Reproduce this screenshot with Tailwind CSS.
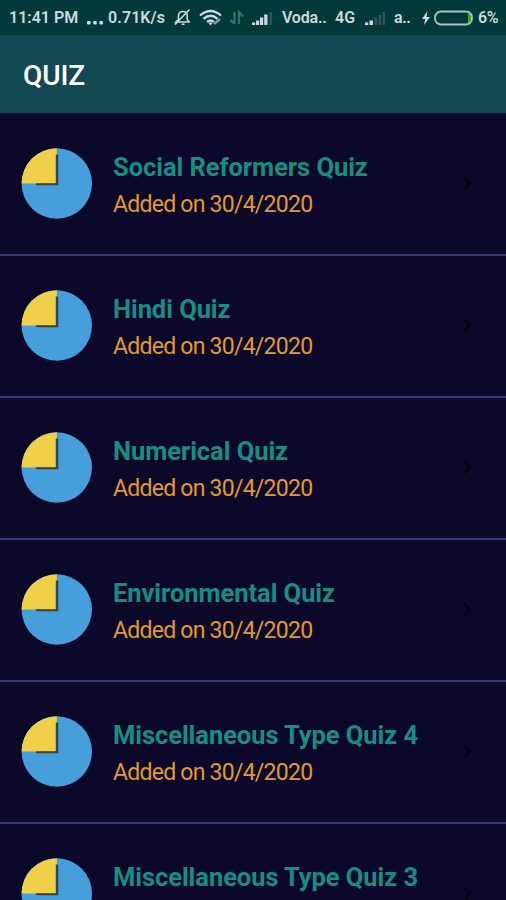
<!DOCTYPE html>
<html lang="en">
<head>
    <meta charset="UTF-8">
    <meta name="viewport" content="width=device-width, initial-scale=1.0">
    <title>Quiz</title>
    <script src="https://cdn.jsdelivr.net/npm/@tailwindcss/browser@4"></script>
</head>
<body class="h-[900px] overflow-hidden bg-[#0c0829] font-['Roboto',sans-serif]">

    <!-- Status bar -->
    <div class="flex h-[35px] items-center bg-[#04393c] pl-[9px] text-[16px] font-semibold whitespace-nowrap text-[#c9dcdd]">
        <span class="w-[77px]">11:41 PM</span>
        <svg class="mr-[4px] h-[18px] w-[18px]" viewBox="0 0 18 18" fill="currentColor">
            <rect x="1" y="12" width="3.6" height="3.6" rx="1"/><rect x="7.2" y="12" width="3.6" height="3.6" rx="1"/><rect x="13.4" y="12" width="3.6" height="3.6" rx="1"/>
        </svg>
        <span class="w-[66px] tracking-[0.1px]">0.71K/s</span>
        <!-- Muted bell -->
        <svg class="mr-[6px] h-[20px] w-[19px]" viewBox="0 0 19 20" fill="none" stroke="currentColor" stroke-width="1.6">
            <path d="M2 14h13L13.2 11.5V7.5C13.2 5 11.5 3.5 9 3.5S4.5 5 4.5 7.5V11.5z"/>
            <path d="M7.5 16.3h3M1 16.5L15.5 1.5"/>
        </svg>
        <!-- Wifi -->
        <svg class="mr-[6px] h-[20px] w-[24px]" viewBox="0 0 24 20" fill="none" stroke="currentColor" stroke-width="2.3">
            <path d="M1 7.5Q11.5-1.5 22 7.5M4.5 10.8Q11.5 4.8 18.5 10.8M8 14Q11.5 11 15 14"/>
            <path d="M9 14.5h5L11.5 17.5z" fill="currentColor" stroke="none"/>
            <path d="M15 16l6-5" class="text-[#7fa3a5]" stroke="currentColor"/>
        </svg>
        <!-- Data arrows -->
        <svg class="mr-[7px] h-[20px] w-[16px] text-[#3f6d6f]" viewBox="0 0 16 20" fill="none" stroke="currentColor" stroke-width="2.2">
            <path d="M5.5 4v12M1.500 12l4 4M10 16V4l4 4.5"/>
        </svg>
        <!-- Signal, first SIM -->
        <svg class="mr-[8px] h-[20px] w-[22px]" viewBox="0 0 22 20" fill="currentColor">
            <path d="M0 14.5h3.2v2.5H0zM4 12.5h3.2V17H4zM8 9.5h3.2V17H8zM12.2 6.5h3.3V17h-3.3z"/>
            <path d="M17.5 4h2.5V17h-2.5z" class="text-[#245558]"/>
        </svg>
        <span class="w-[53px] tracking-[-0.2px]">Voda..</span>
        <span class="w-[30px]">4G</span>
        <!-- Signal, second SIM -->
        <svg class="mr-[7px] h-[20px] w-[22px]" viewBox="0 0 22 20" fill="currentColor">
            <path d="M0 14.5h3.2v2.5H0zM4.5 12.5h3.5V17H4.5z"/>
            <path d="M9.5 9.5h2.5V17H9.5zM13.5 7H16v10h-2.5zM17.5 4H20V17h-2.5z" class="text-[#245558]"/>
        </svg>
        <span class="w-[28px] tracking-[-0.4px]">a..</span>
        <svg class="mr-[4px] h-[14px] w-[8px]" viewBox="0 0 8 14" fill="currentColor">
            <path d="M5.5 0L0 8h3.2L2 14l6-8H4.5z"/>
        </svg>
        <!-- Battery -->
        <svg class="mr-[4px] h-[16px] w-[40px]" viewBox="0 0 40 16">
            <path d="M34 2.5v11q3-1 3-5.5t-3-5.5z" fill="#3fa62a"/>
            <rect x="1" y="1.5" width="37" height="13" rx="6" fill="none" stroke="#a9c3c4" stroke-width="1.8"/>
        </svg>
        <span class="tracking-[-0.4px]">6%</span>
    </div>

    <!-- App bar -->
    <header class="flex h-[78px] items-center bg-[#114852] pl-[23px]">
        <h1 class="pt-[3px] text-[28px] leading-[40px] font-medium tracking-[-0.1px] text-white">QUIZ</h1>
    </header>

    <main id="quiz-list" class="h-[787px] overflow-hidden pt-px"></main>

    <script>
        const quizzes = [
            'Social Reformers Quiz',
            'Hindi Quiz',
            'Numerical Quiz',
            'Environmental Quiz',
            'Miscellaneous Type Quiz 4',
            'Miscellaneous Type Quiz 3'
        ];

        document.getElementById('quiz-list').innerHTML = quizzes.map(title => `
            <div class="flex h-[142px] items-start border-b-2 border-[#39387f] pl-[21px]">
                <svg class="mt-[34px] h-[71px] w-[71px] shrink-0" viewBox="0 0 71 71">
                    <circle cx="35.8" cy="35.5" r="35.2" fill="#469edb"/>
                    <path d="M35.8 .3V35.5H.6A35.2 35.2 0 0 1 35.8 .3z" fill="#f0d048"/>
                    <path d="M34.8 6.5H37.3V37.3H15V35.3H34.8z" fill="#394448"/>
                </svg>
                <div class="mt-[37px] ml-[21px] grow whitespace-nowrap">
                    <h2 class="text-[25.5px] leading-[32px] font-bold tracking-[-0.06px] text-[#168f83]">${title}</h2>
                    <p class="mt-[6px] text-[23px] leading-[32px] tracking-[-0.75px] text-[#e39a2d]">Added on 30/4/2020</p>
                </div>
                <svg class="mt-[62px] mr-[33px] h-[15px] w-[10px]" viewBox="0 0 10 15" fill="none" stroke="#04030f" stroke-width="2.6">
                    <path d="M1.5 2L7 7.5L1.5 13"/>
                </svg>
            </div>
        `).join('');
    </script>
</body>
</html>
